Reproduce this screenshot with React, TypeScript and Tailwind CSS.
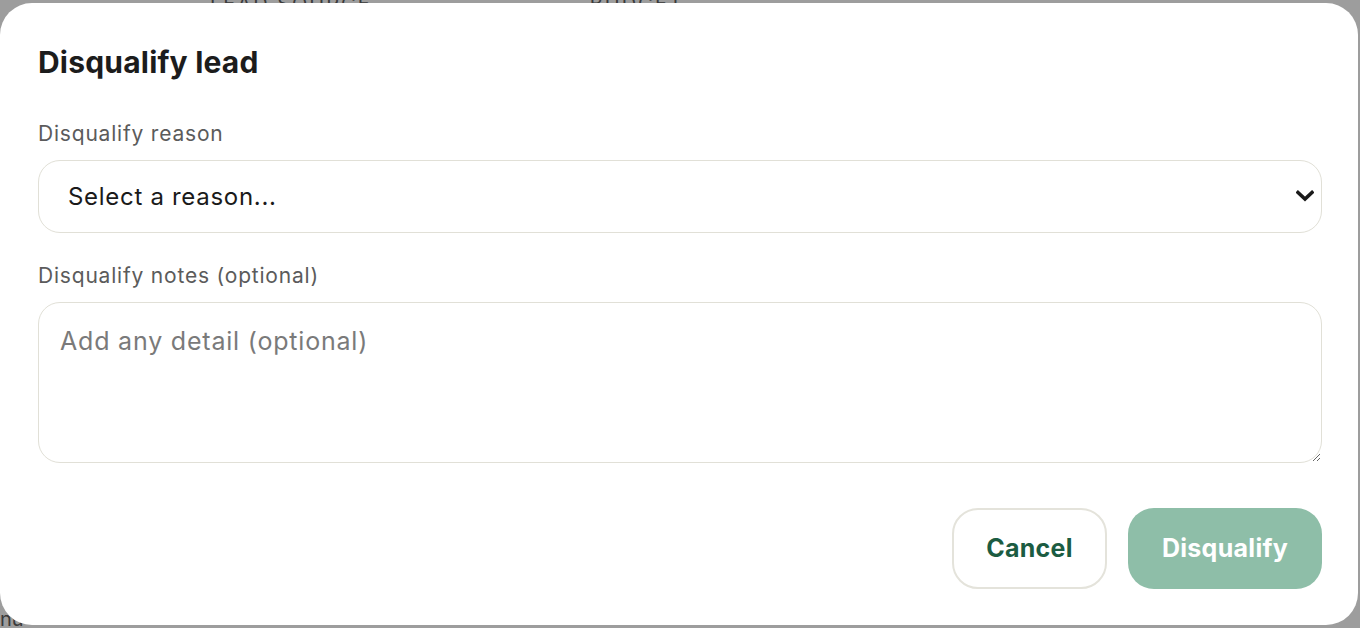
export default function App() {
  return (
    <div className="relative h-[628px] w-[1360px] overflow-hidden bg-[#9d9d9d] font-['Inter',sans-serif]">
      {/* page behind the overlay */}
      <div className="flex gap-[218px] pl-[210px] -mt-[11px] text-[20px] tracking-[2px] text-[#3a3a3a]">
        <span>LEAD SOURCE</span>
        <span>BUDGET</span>
      </div>
      <div className="absolute left-0 bottom-[-6px] text-[20px] text-[#3a3a3a]">nu</div>

      {/* dialog */}
      <div className="absolute left-0 top-[3px] h-[622px] w-[1358px] rounded-[32px] bg-white pl-[38px] pr-[36px] pt-[41px]">
        <h2 className="text-[30px] leading-[36px] font-bold text-[#1c1c1c] tracking-[0.2px]">Disqualify lead</h2>

        <label className="mt-[40px] block text-[21px] leading-[28px] tracking-[0.8px] text-[#5b5b5b]">Disqualify reason</label>
        <div className="relative mt-[12px]">
          <select className="h-[73px] w-full appearance-none rounded-[22px] border border-[#e1e0d7] bg-white pl-[29px] text-[24px] tracking-[0.7px] text-[#1a1a1a] outline-none">
            <option>Select a reason...</option>
          </select>
          <svg className="pointer-events-none absolute right-[8px] top-[30px]" width="18" height="12" viewBox="0 0 18 12" fill="none">
            <path d="M2 2.5l7 6.5 7-6.5" stroke="#1a1a1a" strokeWidth="3.6" strokeLinecap="square" />
          </svg>
        </div>

        <label className="mt-[29px] block text-[21px] leading-[28px] tracking-[0.8px] text-[#5b5b5b]">Disqualify notes (optional)</label>
        <textarea
          placeholder="Add any detail (optional)"
          className="mt-[12px] block h-[161px] w-full rounded-[22px] border border-[#e1e0d7] bg-white px-[21px] pt-[22px] text-[25px] leading-[32px] tracking-[0.8px] text-[#1a1a1a] placeholder:text-[#7a7a7a] outline-none"
        />

        <div className="mt-[45px] flex justify-end gap-[21px]">
          <button className="h-[81px] w-[155px] rounded-[26px] border-2 border-[#e4e3db] bg-white text-[25px] font-bold tracking-[0.3px] text-[#1b5c42]">
            Cancel
          </button>
          <button className="h-[81px] w-[194px] rounded-[26px] bg-[#8ebea8] text-[25px] font-bold tracking-[0.3px] text-white">
            Disqualify
          </button>
        </div>
      </div>
    </div>
  );
}
